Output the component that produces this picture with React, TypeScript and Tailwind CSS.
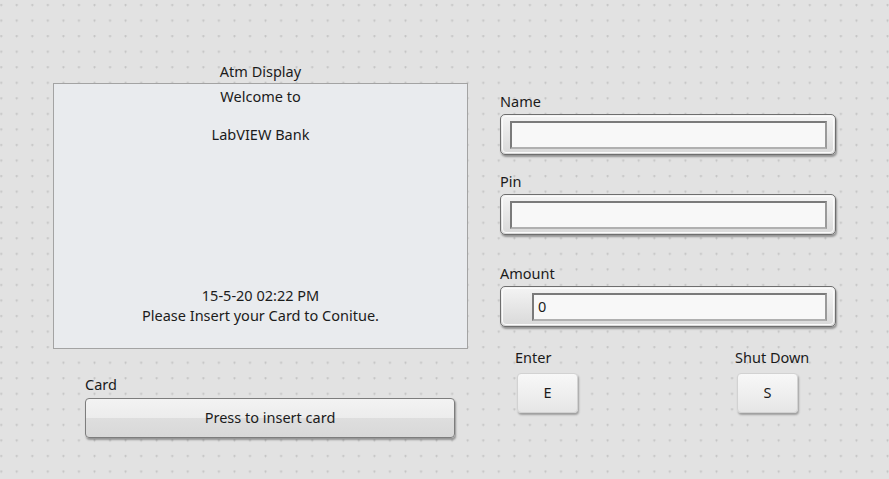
import React from 'react';

function GridBackdrop() {
  return (
    <svg className="absolute inset-0 pointer-events-none" width="889" height="479">
      <defs>
        <pattern id="lvgrid" x="-0.3" y="3.9" width="15.55" height="15.55" patternUnits="userSpaceOnUse">
          <rect x="0" y="0.5" width="3" height="1" fill="#cbcbcb" />
          <rect x="1" y="-0.5" width="1" height="3" fill="#cbcbcb" />
          <rect x="1" y="0.5" width="1" height="1" fill="#bdbdbd" />
        </pattern>
      </defs>
      <rect width="889" height="479" fill="url(#lvgrid)" />
    </svg>
  );
}

function StringControl({ label, value, withIncrement }: { label: string; value?: string; withIncrement?: boolean }) {
  return (
    <div className="flex flex-col">
      <span className="h-[20px] leading-[20px] text-[14.5px] text-[#1b1b1b]">{label}</span>
      <div className="mt-[3px] w-[336px] h-[41px] rounded-[5px] border border-[#6e6e6e] bg-gradient-to-b from-[#f4f4f4] to-[#d9d9d9] shadow-[1px_2px_2px_rgba(0,0,0,0.35)] p-[1px]">
        <div className="h-full w-full rounded-[4px] border border-[#fbfbfb] flex items-center pr-[6px] pl-[7px]">
          {withIncrement && <div className="w-[22px] h-full" />}
          <div className="flex-1 h-[28px] border-2 border-t-[#7a7a7a] border-l-[#7a7a7a] border-r-[#9a9a9a] border-b-[#b0b0b0] bg-[#f8f8f8] flex items-center px-[4px] text-[14.5px] text-[#1b1b1b]">
            {value}
          </div>
        </div>
      </div>
    </div>
  );
}

function SmallButton({ label, letter }: { label: string; letter: string }) {
  return (
    <div className="flex flex-col items-start">
      <span className="-ml-[2px] h-[20px] leading-[20px] text-[14.5px] text-[#1b1b1b] whitespace-nowrap">{label}</span>
      <div className="mt-[6px] w-[61px] h-[40px] rounded-[4px] border border-[#d2d2d2] bg-gradient-to-b from-[#f8f8f8] to-[#e6e6e6] shadow-[1px_2px_2px_rgba(0,0,0,0.3)] flex items-center justify-center text-[14.5px] text-[#1b1b1b]">
        {letter}
      </div>
    </div>
  );
}

export default function App() {
  return (
    <div
      className="relative w-[889px] h-[479px] overflow-hidden bg-[#e2e2e2] text-[#1b1b1b]"
      style={{ fontFamily: '"Noto Sans", "Open Sans", sans-serif' }}
    >
      <GridBackdrop />
      <div className="relative flex">
        {/* Left: display + card button */}
        <div className="ml-[53px] mt-[61px] flex flex-col">
          <div className="w-[415px] h-[20px] leading-[20px] text-center text-[14.5px]">Atm Display</div>
          <div className="mt-[2px] w-[415px] h-[266px] border border-[#a3a3a3] bg-[#e9ebee] flex flex-col items-center justify-between pt-[3px] pb-[23px] text-[14.5px] leading-[19px] text-center">
            <div className="flex flex-col items-center">
              <span>Welcome to</span>
              <span>&nbsp;</span>
              <span>LabVIEW Bank</span>
            </div>
            <div className="flex flex-col items-center leading-[20px]">
              <span>15-5-20 02:22 PM</span>
              <span>Please Insert your Card to Conitue.</span>
            </div>
          </div>
          <div className="ml-[32px] mt-[25px] flex flex-col">
            <span className="h-[20px] leading-[20px] text-[14.5px]">Card</span>
            <div className="mt-[4px] w-[370px] h-[40px] rounded-[4px] border border-[#7d7d7d] bg-[linear-gradient(to_bottom,#f3f3f3_0%,#ececec_50%,#dedede_50%,#d8d8d8_100%)] shadow-[1px_2px_2px_rgba(0,0,0,0.35)] flex items-center justify-center text-[14.5px]">
              Press to insert card
            </div>
          </div>
        </div>

        {/* Right: inputs + buttons */}
        <div className="ml-[32px] mt-[91px] flex flex-col">
          <StringControl label="Name" />
          <div className="mt-[16px]">
            <StringControl label="Pin" />
          </div>
          <div className="mt-[28px]">
            <StringControl label="Amount" value="0" withIncrement />
          </div>
          <div className="mt-[20px] flex w-[336px] pl-[17px]">
            <SmallButton label="Enter" letter="E" />
            <div className="ml-[159px]">
              <SmallButton label="Shut Down" letter="S" />
            </div>
          </div>
        </div>
      </div>
    </div>
  );
}
